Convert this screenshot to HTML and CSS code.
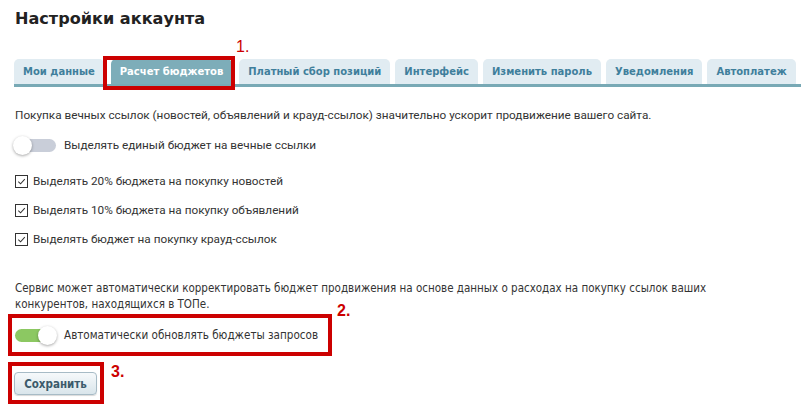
FILE: index.html
```html
<!DOCTYPE html>
<html lang="ru">
<head>
<meta charset="utf-8">
<title>Настройки аккаунта</title>
<link rel="stylesheet" href="styles.css">
</head>
<body>
<div class="page">
  <h1 class="title">Настройки аккаунта</h1>

  <div class="tabs">
    <div class="tab">Мои данные</div>
    <div class="tab tab-active">Расчет бюджетов</div>
    <div class="tab">Платный сбор позиций</div>
    <div class="tab">Интерфейс</div>
    <div class="tab">Изменить пароль</div>
    <div class="tab">Уведомления</div>
    <div class="tab">Автоплатеж</div>
    <div class="mark mark-box mark-box-1"></div>
    <div class="mark mark-num mark-num-1">1.</div>
  </div>

  <div class="content">
    <p class="lead">Покупка вечных ссылок (новостей, объявлений и крауд-ссылок) значительно ускорит продвижение вашего сайта.</p>

    <div class="switch-row">
      <span class="switch"><span class="knob"></span></span>
      <span class="label">Выделять единый бюджет на вечные ссылки</span>
    </div>

    <div class="checks">
      <div class="check-row"><span class="checkbox"><svg viewBox="0 0 12 12" width="12" height="12"><path d="M2.5 6.2 L5 8.6 L9.6 3.4" fill="none" stroke="#333" stroke-width="1.1"/></svg></span><span class="label">Выделять 20% бюджета на покупку новостей</span></div>
      <div class="check-row"><span class="checkbox"><svg viewBox="0 0 12 12" width="12" height="12"><path d="M2.5 6.2 L5 8.6 L9.6 3.4" fill="none" stroke="#333" stroke-width="1.1"/></svg></span><span class="label">Выделять 10% бюджета на покупку объявлений</span></div>
      <div class="check-row"><span class="checkbox"><svg viewBox="0 0 12 12" width="12" height="12"><path d="M2.5 6.2 L5 8.6 L9.6 3.4" fill="none" stroke="#333" stroke-width="1.1"/></svg></span><span class="label">Выделять бюджет на покупку крауд-ссылок</span></div>
    </div>

    <p class="note">Сервис может автоматически корректировать бюджет продвижения на основе данных о расходах на покупку ссылок ваших конкурентов, находящихся в ТОПе.</p>

    <div class="switch-row switch-row-auto">
      <span class="switch switch-on"><span class="knob"></span></span>
      <span class="label label-tahoma">Автоматически обновлять бюджеты запросов</span>
      <div class="mark mark-box mark-box-2"></div>
      <div class="mark mark-num mark-num-2">2.</div>
    </div>

    <div class="actions">
      <button class="btn" type="button">Сохранить</button>
      <div class="mark mark-box mark-box-3"></div>
      <div class="mark mark-num mark-num-3">3.</div>
    </div>
  </div>
</div>
</body>
</html>
```

FILE: styles.css
```css
* { box-sizing: border-box; }

html, body {
  margin: 0;
  padding: 0;
  background: #ffffff;
}

body {
  font-family: "Roboto", "Liberation Sans", sans-serif;
  font-size: 11.75px;
  color: #333333;
}

.page {
  width: 801px;
  height: 409px;
  overflow: hidden;
  padding: 0 0 0 14px;
}

.title {
  margin: 0;
  padding: 9px 0 0 1px;
  height: 59px;
  font-family: "DejaVu Sans", "Liberation Sans", sans-serif;
  font-weight: bold;
  font-size: 16.1px;
  line-height: 20px;
  color: #222222;
}

/* Tabs */
.tabs {
  position: relative;
  display: flex;
  gap: 5px;
  height: 28px;
  border-bottom: 3px solid #78a9b5;
}

.tab {
  height: 25px;
  padding: 0 9px;
  display: flex;
  align-items: center;
  background: #e1ecf2;
  border-radius: 5px 5px 0 0;
  font-family: "DejaVu Sans", "Liberation Sans", sans-serif;
  font-weight: bold;
  font-size: 10px;
  color: #3f7f9c;
  white-space: nowrap;
}

.tab-active {
  background: #7dadb9;
  color: #ffffff;
  margin: 0 2px;
}

/* Annotations */
.mark-box {
  position: absolute;
  border: 4px solid #cc0000;
}

.mark-num {
  position: absolute;
  font-family: "Liberation Sans", sans-serif;
  font-size: 16px;
  line-height: 16px;
  color: #cc0000;
}

.mark-box-1 { left: 89px; top: -3px; width: 132px; height: 34px; }
.mark-num-1 { left: 222px; top: -20px; font-weight: normal; }

/* Content */
.content {
  padding: 20px 0 0 1px;
}

.lead {
  margin: 0;
  line-height: 16px;
}

.switch-row {
  display: flex;
  align-items: center;
  gap: 8px;
  height: 20px;
  margin-top: 12px;
}

.switch {
  position: relative;
  width: 41px;
  height: 13px;
  border-radius: 7px;
  background: #c9ced9;
  flex: none;
}

.knob {
  position: absolute;
  left: -2px;
  top: -3px;
  width: 19px;
  height: 19px;
  border-radius: 50%;
  background: #ffffff;
  box-shadow: 0 1px 3px rgba(0, 0, 0, 0.35);
}

.switch-on {
  background: #8cc862;
}

.switch-on .knob {
  left: auto;
  right: -1px;
}

.checks {
  display: flex;
  flex-direction: column;
  gap: 13px;
  margin-top: 18px;
}

.check-row {
  display: flex;
  align-items: center;
  gap: 5px;
  height: 16px;
}

.checkbox {
  width: 13px;
  height: 13px;
  border: 1px solid #333333;
  background: #ffffff;
  display: flex;
  align-items: center;
  justify-content: center;
  flex: none;
}

.checkbox svg { display: block; width: 11px; height: 11px; }

.note {
  margin: 33px 0 0;
  line-height: 16px;
  width: 760px;
  font-family: "DejaVu Sans Condensed", "Liberation Sans", sans-serif;
  font-size: 11.5px;
}

.label-tahoma {
  font-family: "DejaVu Sans Condensed", "Liberation Sans", sans-serif;
  font-size: 11.6px;
}

.switch-row-auto {
  position: relative;
  margin-top: 13px;
}

.mark-box-2 { left: -7px; top: -11px; width: 324px; height: 42px; }
.mark-num-2 { left: 322px; top: -22px; font-weight: bold; }

.actions {
  position: relative;
  margin-top: 27px;
  margin-left: -1px;
}

.btn {
  display: block;
  width: 83px;
  height: 23px;
  padding: 0;
  border: 1px solid #a7bbc6;
  border-radius: 4px;
  background: linear-gradient(#f6f9fb, #d9e5eb);
  font-family: "DejaVu Sans Condensed", "Liberation Sans", sans-serif;
  font-weight: bold;
  font-size: 11.5px;
  color: #3b5a6b;
  box-shadow: 0 1px 1px rgba(0, 0, 0, 0.15);
}

.mark-box-3 { left: -6px; top: -10px; width: 96px; height: 42px; }
.mark-num-3 { left: 97px; top: -8px; font-weight: bold; }
```
